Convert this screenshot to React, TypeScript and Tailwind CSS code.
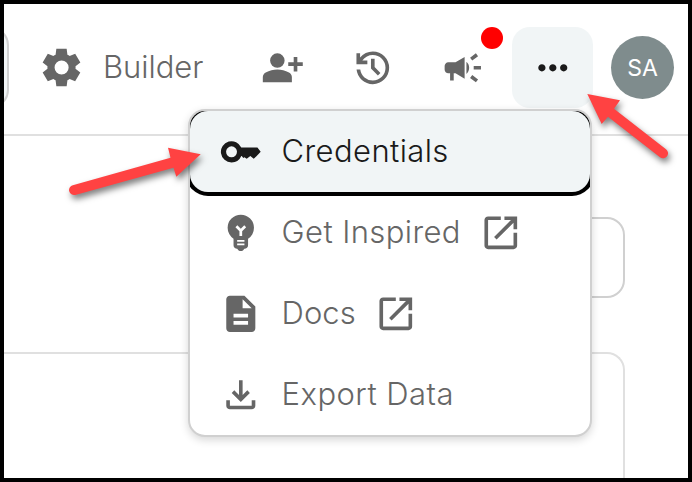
import type { ReactNode } from "react";

const paths = {
  settings:
    "m370-80-16-128q-13-5-24.5-12T307-235l-119 50L78-375l103-78q-1-7-1-13.5v-27q0-6.5 1-13.5L78-585l110-190 119 50q11-8 23-15t24-12l16-128h220l16 128q13 5 24.5 12t22.5 15l119-50 110 190-103 78q1 7 1 13.5v27q0 6.5-2 13.5l103 78-110 190-118-50q-11 8-23 15t-24 12L590-80H370Zm112-250q62 0 106-44t44-106q0-62-44-106t-106-44q-62 0-106 44t-44 106q0 62 44 106t106 44Z",
  personAdd:
    "M720-400v-120H600v-80h120v-120h80v120h120v80H800v120h-80Zm-360-80q-66 0-113-47t-47-113q0-66 47-113t113-47q66 0 113 47t47 113q0 66-47 113t-113 47ZM40-160v-112q0-34 17.5-62.5T104-378q62-31 126-46.5T360-440q66 0 130 15.5T616-378q29 15 46.5 43.5T680-272v112H40Z",
  history:
    "M480-120q-138 0-240.5-91.5T122-440h82q14 104 92.5 172T480-200q117 0 198.5-81.5T760-480q0-117-81.5-198.5T480-760q-69 0-129 32t-101 88h110v80H120v-240h80v94q51-64 124.5-99T480-840q75 0 140.5 28.5t114 77q48.5 48.5 77 114T840-480q0 75-28.5 140.5t-77 114q-48.5 48.5-114 77T480-120Zm112-192L440-464v-216h80v184l128 128-56 56Z",
  campaign:
    "M720-440v-80h160v80H720Zm48 280-128-96 48-64 128 96-48 64Zm-80-480-48-64 128-96 48 64-128 96ZM200-200v-160h-40q-33 0-56.5-23.5T80-440v-80q0-33 23.5-56.5T160-600h160l200-120v480L320-360h-40v160h-80Zm360-146v-268q27 24 43.5 58.5T620-480q0 41-16.5 75.5T560-346Z",
  more: "M240-400q-33 0-56.5-23.5T160-480q0-33 23.5-56.5T240-560q33 0 56.5 23.5T320-480q0 33-23.5 56.5T240-400Zm240 0q-33 0-56.5-23.5T400-480q0-33 23.5-56.5T480-560q33 0 56.5 23.5T560-480q0 33-23.5 56.5T480-400Zm240 0q-33 0-56.5-23.5T640-480q0-33 23.5-56.5T720-560q33 0 56.5 23.5T800-480q0 33-23.5 56.5T720-400Z",
  key: "M276-246a234 234 0 1 1 215-326H846L918-480 830-386 764-326 690-386 610-326 560-362 536-346 500-388H491A234 234 0 0 1 276-246Zm0-114a120 120 0 1 0 0-240a120 120 0 0 0 0 240Z",
  bulb: "M480-80q-26 0-47-12.5T400-126q-33 0-56.5-23.5T320-206v-142q-59-39-94.5-103T190-590q0-121 84.5-205.5T480-880q121 0 205.5 84.5T770-590q0 77-35.5 140T640-348v142q0 33-23.5 56.5T560-126q-12 21-33 33.5T480-80Zm-80-126h160v-36H400v36Zm0-76h160v-38H400v38Zm110-126v-108l88-88-42-42-76 76-76-76-42 42 88 88v108h60Z",
  docs: "M320-240h320v-80H320v80Zm0-160h320v-80H320v80ZM240-80q-33 0-56.5-23.5T160-160v-640q0-33 23.5-56.5T240-880h320l240 240v480q0 33-23.5 56.5T720-80H240Zm280-520h200L520-800v200Z",
  download:
    "M480-320 280-520l56-58 104 104v-326h80v326l104-104 56 58-200 200ZM240-160q-33 0-56.5-23.5T160-240v-120h80v120h480v-120h80v120q0 33-23.5 56.5T720-160H240Z",
  openInNew:
    "M200-120q-33 0-56.5-23.5T120-200v-560q0-33 23.5-56.5T200-840h280v80H200v560h560v-280h80v280q0 33-23.5 56.5T760-120H200Zm188-212-56-56 372-372H560v-80h280v280h-80v-144L388-332Z",
};

function Icon({ name, className = "size-[43.6px]" }: { name: keyof typeof paths; className?: string }) {
  return (
    <svg viewBox="0 -960 960 960" className={`shrink-0 ${className}`} fill="currentColor" fillRule="evenodd">
      <path d={paths[name]} />
    </svg>
  );
}

function ToolButton({ children, active = false }: { children: ReactNode; active?: boolean }) {
  return (
    <button
      className={`relative flex size-[81px] shrink-0 items-center justify-center rounded-[18px] ${
        active ? "bg-[#f1f5f6] text-[#1a1a1a]" : ""
      }`}
    >
      {children}
    </button>
  );
}

function MenuItem({
  icon,
  label,
  tracking,
  external = false,
  focused = false,
}: {
  icon: keyof typeof paths;
  label: string;
  tracking: string;
  external?: boolean;
  focused?: boolean;
}) {
  return (
    <li
      className={`flex h-[81px] items-center rounded-[18px] pl-[29px] ${
        focused ? "bg-[#f1f5f6] text-[#1a1a1a] shadow-[0_0_0_4px_#000]" : ""
      }`}
    >
      <Icon name={icon} />
      <span className={`mb-[2px] ml-[19px] whitespace-nowrap ${tracking}`}>{label}</span>
      {external && <Icon name="openInNew" className="ml-[18px] size-[43.6px]" />}
    </li>
  );
}

export default function App() {
  return (
    <div className="relative h-[482px] w-[692px] overflow-hidden border-4 border-black bg-white font-['Inter',sans-serif] text-[31px] leading-[40px] font-[355] text-[#666666]">
      <header className="flex h-[132px] items-start border-b-2 border-[#e0e0e0]">
        <div className="mt-[23px] -ml-[55px] h-[81px] w-[60px] shrink-0 rounded-[18px] border-2 border-[#d0d0d0] bg-[#f1f5f6]" />
        <div className="mt-[23px] flex h-[81px] w-[233px] shrink-0 items-center pl-[30px]">
          <Icon name="settings" className="size-[45px]" />
          <span className="mb-[2px] ml-[19px] tracking-[-0.05px]">Builder</span>
        </div>
        <div className="mt-[23px] flex items-center gap-[9px]">
          <ToolButton>
            <Icon name="personAdd" />
          </ToolButton>
          <ToolButton>
            <Icon name="history" />
          </ToolButton>
          <ToolButton>
            <Icon name="campaign" />
            <span className="absolute top-0 right-0 size-[22px] rounded-full bg-[#ff0000]" />
          </ToolButton>
          <ToolButton active>
            <Icon name="more" />
          </ToolButton>
          <div className="ml-[9px] flex size-[63px] items-center justify-center rounded-full bg-[#7f8c8d] text-[23px] font-normal text-white">
            SA
          </div>
        </div>
      </header>
      <main>
        <div className="mt-[81px] ml-[300px] h-[81px] w-[321px] rounded-[18px] border-2 border-[#d0d0d0]" />
        <div className="mt-[54px] h-[150px] w-[621px] rounded-tr-[18px] border-t-2 border-r-2 border-[#e0e0e0]" />
      </main>
      <ul className="absolute top-[105px] left-[184px] h-[328px] w-[404px] overflow-hidden rounded-[17px] border-2 border-[#d0d0d0] bg-white shadow-[0_3px_8px_rgba(0,0,0,0.16)]">
        <MenuItem icon="key" label="Credentials" tracking="tracking-[0.4px]" focused />
        <MenuItem icon="bulb" label="Get Inspired" tracking="tracking-[0.4px]" external />
        <MenuItem icon="docs" label="Docs" tracking="tracking-[0.05px]" external />
        <MenuItem icon="download" label="Export Data" tracking="tracking-[0.45px]" />
      </ul>
      <svg
        viewBox="4 4 684 474"
        className="pointer-events-none absolute inset-0 h-[474px] w-[684px] drop-shadow-[2px_4px_3px_rgba(0,0,0,0.5)]"
        fill="#ff4242"
      >
        <path d="M587.3 94 620 100.3 614 108.7 666 149.2A5 5 0 0 1 660 157.3L608 116.7 601.7 124Z" />
        <path d="M200.7 154.3 168 147.7 170.5 157.7 72.8 185.2A5 5 0 0 0 75.3 194.9L173.5 167.8 176.3 176.7Z" />
      </svg>
    </div>
  );
}
